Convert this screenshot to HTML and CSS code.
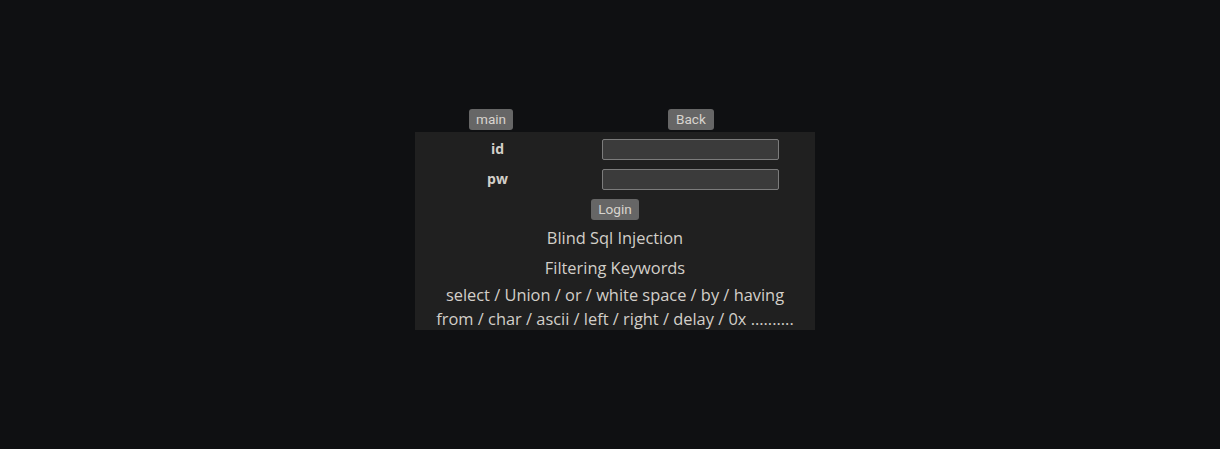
FILE: index.html
```html
<!DOCTYPE html>
<html>
<head>
<meta charset="utf-8">
<link rel="stylesheet" href="styles.css">
</head>
<body>
<div class="wrap">
  <div class="nav">
    <div class="nav-cell nav-left"><button class="btn">main</button></div>
    <div class="nav-cell nav-right"><button class="btn btn-back">Back</button></div>
  </div>
  <div class="panel">
    <form class="form">
      <div class="label">id</div>
      <div class="field"><input class="input" type="text"></div>
      <div class="label">pw</div>
      <div class="field"><input class="input" type="password"></div>
      <div class="submit"><button class="btn" type="button">Login</button></div>
    </form>
    <p class="title first">Blind Sql Injection</p>
    <p class="title">Filtering Keywords</p>
    <p class="keywords">select / Union / or / white space / by / having<br>from / char / ascii / left / right / delay / 0x ..........</p>
  </div>
</div>
</body>
</html>
```
FILE: styles.css
```css
html, body {
  margin: 0;
  padding: 0;
  background: #0f1012;
  height: 100%;
}
body {
  font-family: "Open Sans", "Liberation Sans", sans-serif;
  color: #d3cfc9;
  padding-left: 10px;
  box-sizing: border-box;
}
.wrap {
  width: 400px;
  margin: 0 auto;
  padding-top: 109px;
}
.nav {
  display: flex;
  align-items: flex-start;
  height: 23px;
}
.nav-cell {
  display: flex;
}
.nav-left {
  width: 54px;
  margin-left: 54px;
}
.nav-right {
  margin-left: 145px;
}
.btn {
  font-family: Roboto, "Liberation Sans", sans-serif;
  font-size: 13.6px;
  color: #d8d4ce;
  background: #666666;
  border: none;
  border-radius: 3px;
  height: 21px;
  padding: 0 7px;
  line-height: 21px;
  margin: 0;
}
.btn-back {
  padding: 0 8px;
}
.panel {
  background: #202020;
  text-align: center;
  padding-top: 7px;
  height: 191px;
  overflow: hidden;
}
.form {
  display: grid;
  grid-template-columns: 165px 235px;
  row-gap: 9px;
  margin: 0;
}
.label {
  font-weight: bold;
  font-size: 14px;
  line-height: 20px;
  text-align: center;
}
.field {
  text-align: left;
  padding-left: 22px;
  height: 21px;
}
.input {
  display: block;
  box-sizing: border-box;
  width: 177px;
  height: 21px;
  background: #3b3b3b;
  border: 1px solid #7c7c7c;
  border-radius: 2px;
  margin: 0;
  padding: 0 2px;
  color: #d3cfc9;
}
.submit {
  grid-column: 1 / 3;
  display: flex;
  justify-content: center;
}
.title {
  margin: 0;
  font-size: 16.4px;
  line-height: 30px;
}
.title.first {
  margin-top: 3px;
}
.keywords {
  margin: 0;
  font-size: 16.4px;
  line-height: 24px;
}
```
